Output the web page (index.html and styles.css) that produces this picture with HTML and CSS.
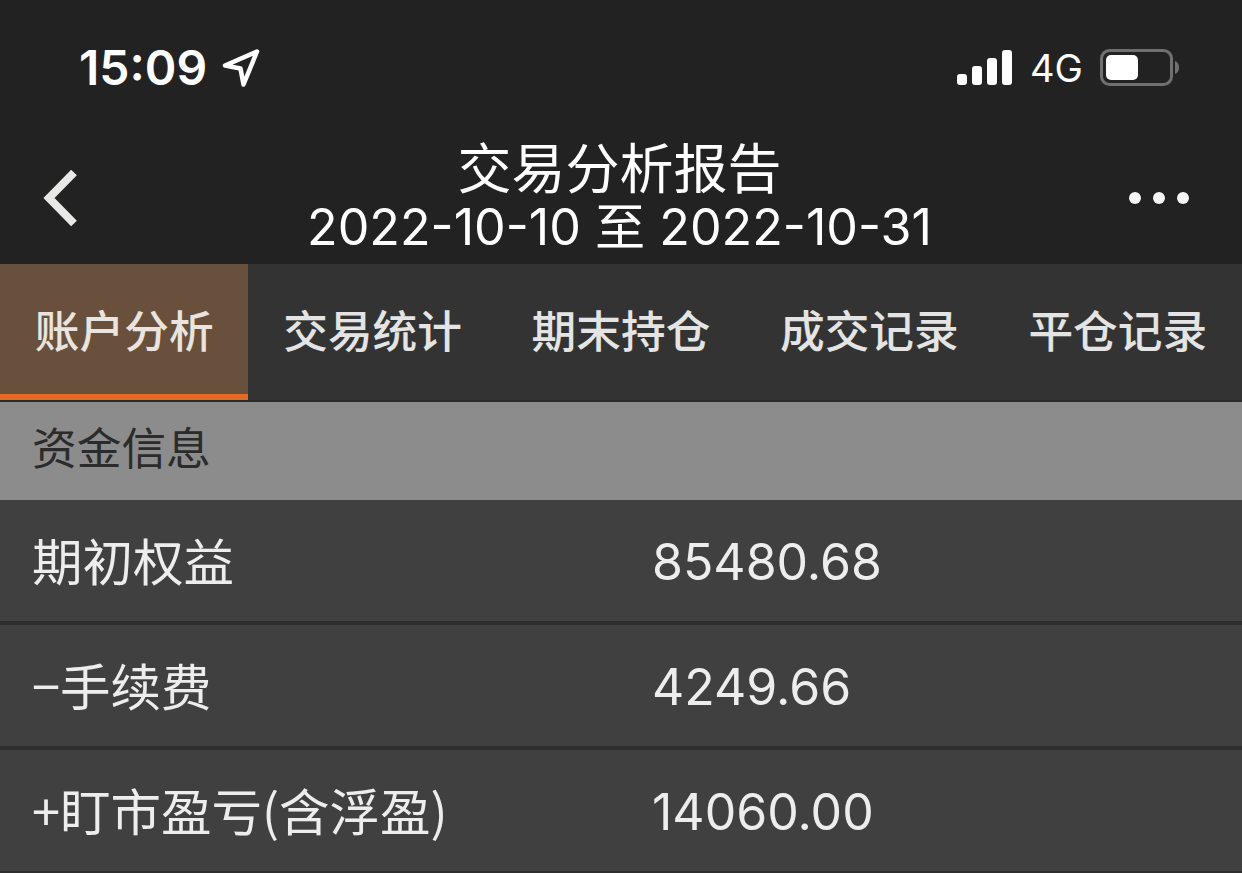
FILE: index.html
```
<!DOCTYPE html>
<html lang="zh-CN">
<head>
<meta charset="utf-8">
<title>交易分析报告</title>
<link rel="stylesheet" href="styles.css">
</head>
<body>
<div class="app">
  <header class="top">
    <div class="status">
      <div class="status-left">
        <span class="time">15:09</span>
        <svg class="loc" width="38" height="38" viewBox="0 0 38 38"><path d="M35 2.500 3 16.500 18.500 19.500 21.500 35.500Z" fill="none" stroke="#fff" stroke-width="4.500" stroke-linejoin="round"/></svg>
      </div>
      <div class="status-right">
        <svg class="signal" width="56" height="36" viewBox="0 0 56 36"><rect x="0" y="24" width="10" height="11" rx="3"/><rect x="15" y="16" width="10" height="19" rx="3"/><rect x="30" y="8" width="10" height="27" rx="3"/><rect x="45" y="0" width="10" height="35" rx="3"/></svg>
        <span class="net">4G</span>
        <svg class="batt" width="80" height="38" viewBox="0 0 80 38"><rect x="1.500" y="1.500" width="70" height="34" rx="8" fill="none" stroke="#707070" stroke-width="3"/><rect x="6" y="6" width="32" height="25" rx="5" fill="#fff"/><path d="M75 12c3 1 4 4 4 6.500s-1 5.500-4 6.500Z" fill="#707070"/></svg>
      </div>
    </div>
    <div class="nav">
      <svg class="back" width="36" height="58" viewBox="0 0 36 58"><path d="M32 3.500 7 29l25 25.500" fill="none" stroke="#e8e8e6" stroke-width="8"/></svg>
      <div class="title">
        <div class="title-main">交易分析报告</div>
        <div class="title-sub">2022-10-10 至 2022-10-31</div>
      </div>
      <div class="more"><i></i><i></i><i></i></div>
    </div>
  </header>
  <nav class="tabs">
    <div class="tab active">账户分析</div>
    <div class="tab">交易统计</div>
    <div class="tab">期末持仓</div>
    <div class="tab">成交记录</div>
    <div class="tab">平仓记录</div>
  </nav>
  <div class="section">资金信息</div>
  <div class="row"><span class="label">期初权益</span><span class="value">85480.68</span></div>
  <div class="row"><span class="label">−手续费</span><span class="value">4249.66</span></div>
  <div class="row"><span class="label">+盯市盈亏(含浮盈)</span><span class="value">14060.00</span></div>
</div>
</body>
</html>
```
FILE: styles.css
```
* { box-sizing: border-box; }
html, body { margin: 0; padding: 0; background: #222; }
body { font-family: Inter, "Noto Sans CJK SC", sans-serif; width: 1242px; height: 873px; overflow: hidden; }
.app { width: 1242px; height: 873px; display: flex; flex-direction: column; overflow: hidden; }
.top { height: 264px; background: #222; color: #fff; display: flex; flex-direction: column; flex: none; }
.status { height: 134px; display: flex; justify-content: space-between; align-items: flex-start; padding: 40px 62px 0 79px; }
.status-left { display: flex; align-items: center; gap: 15px; }
.time { font-size: 48px; font-weight: 600; line-height: 56px; }
.loc { display: block; }
.status-right { display: flex; align-items: center; padding-top: 9px; }
.signal { fill: #fff; display: block; }
.net { font-size: 38px; line-height: 38px; margin-left: 17px; width: 71px; }
.batt { display: block; margin-left: -1px; }
.nav { height: 130px; display: flex; align-items: center; justify-content: space-between; padding: 0 52px 0 42px; margin-top: -4px; }
.back { display: block; margin-top: 6px; }
.title { text-align: center; flex: 1; padding-left: 32px; }
.title-main { font-size: 54px; line-height: 60px; padding-top: 7px; font-family: Inter, "Noto Sans CJK SC", sans-serif; }
.title-sub { font-size: 50.200px; line-height: 60px; margin-top: -3px; font-family: Inter, "Noto Sans CJK SC", sans-serif; }
.more { display: flex; gap: 12px; margin-top: 6px; margin-right: 1px; }
.more i { width: 12px; height: 12px; border-radius: 50%; background: #f7f7f7; display: block; }
.tabs { height: 138px; background: #333; border-bottom: 2px solid #2b2b2b; display: flex; flex: none; }
.tab { width: 248.400px; height: 136px; display: flex; align-items: center; justify-content: center; color: #e4e4e4; font-size: 44.700px; font-weight: 500; padding-bottom: 8px; font-family: "Noto Sans CJK SC", sans-serif; }
.tab.active { background: #68503c; border-bottom: 6px solid #e56a23; color: #e9e4df; padding-bottom: 2px; }
.section { height: 98px; flex: none; background: #8c8c8c; color: #2b2b2b; font-size: 44.700px; line-height: 88px; padding-left: 32px; font-family: "Noto Sans CJK SC", sans-serif; }
.row { height: 125px; flex: none; background: #404040; border-bottom: 4px solid #2e2e2e; display: flex; align-items: center; padding: 0 0 3px 32px; color: #ededed; }
.label { width: 620px; flex: none; font-size: 50.500px; font-family: "Noto Sans CJK SC", sans-serif; }
.value { font-size: 50px; padding-top: 6px; }
```
